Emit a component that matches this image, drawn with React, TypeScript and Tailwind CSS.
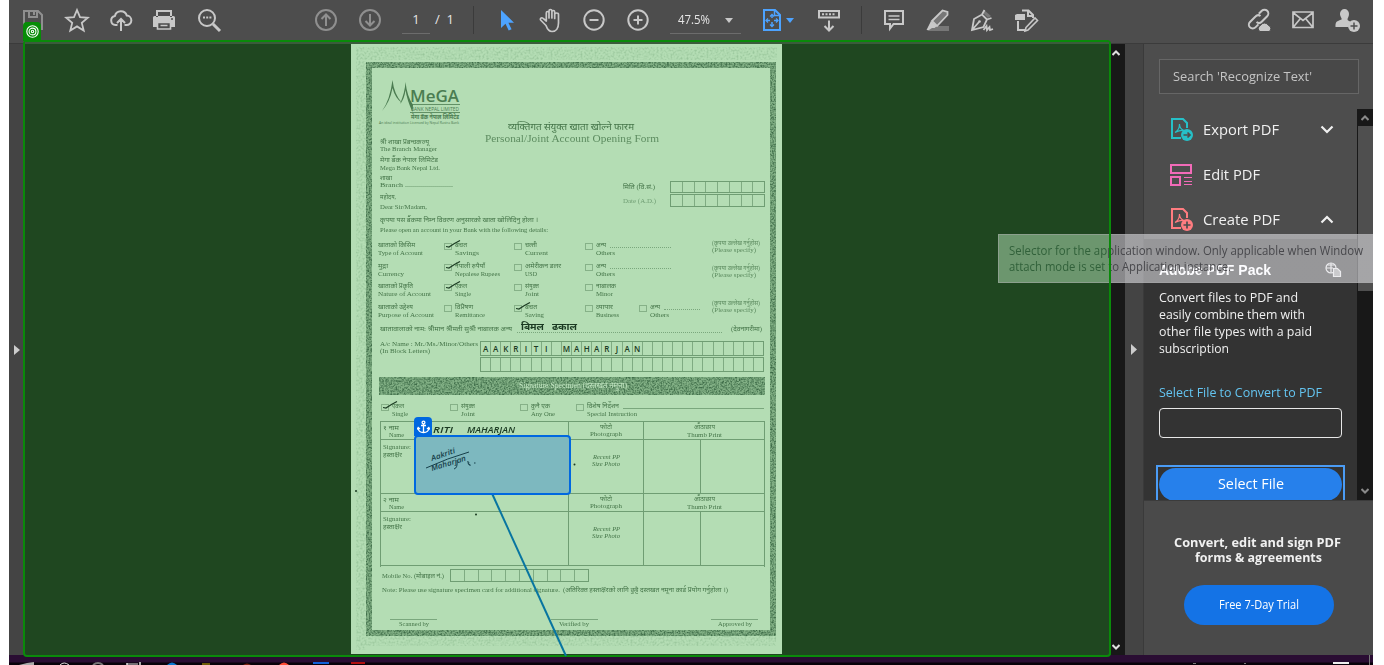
import React, { useLayoutEffect, useRef, useState } from "react";

type FitProps = { className?: string; children: React.ReactNode };

/** Single line of text stretched to the exact width of its box. */
function Fit({ className = "", children }: FitProps) {
  const box = useRef<HTMLSpanElement>(null);
  const ink = useRef<HTMLSpanElement>(null);
  const [scale, setScale] = useState(1);
  useLayoutEffect(() => {
    if (box.current && ink.current && ink.current.offsetWidth > 0) {
      setScale(box.current.clientWidth / ink.current.getBoundingClientRect().width);
    }
  }, []);
  return (
    <span ref={box} className={`block shrink-0 whitespace-nowrap ${className}`}>
      <span ref={ink} className="inline-block origin-left" style={{ transform: `scaleX(${scale})` }}>
        {children}
      </span>
    </span>
  );
}

function Slot({ children, className = "w-11" }: { children: React.ReactNode; className?: string }) {
  return <div className={`flex h-full shrink-0 items-center justify-center ${className}`}>{children}</div>;
}

function Icon({ children, className = "" }: { children: React.ReactNode; className?: string }) {
  return (
    <svg width="26" height="26" viewBox="0 0 26 26" fill="none" stroke="#c8c8c8" strokeWidth="2" className={`shrink-0 ${className}`}>
      {children}
    </svg>
  );
}

function Toolbar() {
  return (
    <header className="flex h-11 shrink-0 items-start border-b border-[#3b3b3b] bg-[#4d4d4d] pl-0.5 font-['Open_Sans',sans-serif] text-[13px] text-[#e6e6e6]">
      <div className="flex h-10 w-full items-center">
        <Slot>
          <Icon>
            <g stroke="#8f8f8f">
              <path d="M4 4h14l4 4v14H4z" />
              <path d="M9 4v6h8V4M14 5v3" />
            </g>
          </Icon>
        </Slot>
        <Slot>
          <Icon><path strokeWidth="1.800" d="M13 3l3 7.200 7.800.6-6 5.100 1.900 7.600L13 19.400l-6.700 4.100 1.900-7.600-6-5.100 7.800-.6z" /></Icon>
        </Slot>
        <Slot>
          <Icon><path d="M9.500 18H7.500a4.600 4.600 0 0 1-.6-9.100A6.200 6.200 0 0 1 18.800 8.600 4.700 4.700 0 0 1 18.500 18h-2M13 24V12.500M9 16l4-4 4 4" /></Icon>
        </Slot>
        <Slot>
          <Icon className="-translate-x-px">
            <g fill="#c8c8c8" stroke="none">
              <path fillRule="evenodd" d="M5 3h16v7H5zM7 5v5h12V5zM3.500 9h19a1.500 1.500 0 0 1 1.500 1.500V20h-4v-4H6v4H2v-9.500A1.500 1.500 0 0 1 3.500 9z" />
            </g>
            <path d="M6.500 15.500h13V22h-13zM9.500 18.500h7" strokeWidth="1.600" />
            <path d="M20 12h2" stroke="#4d4d4d" strokeWidth="1.500" />
          </Icon>
        </Slot>
        <Slot>
          <Icon>
            <circle cx="11" cy="11" r="8" />
            <path d="M17 17l7 7" strokeWidth="3" />
            <path d="M7 10.500h2M10.200 10.500h2M13.400 10.500h2" />
          </Icon>
        </Slot>
        <Slot className="ml-[73px] w-11">
          <Icon><g stroke="#8f8f8f"><circle cx="13" cy="13" r="10" /><path d="M13 19V8M8.500 12L13 7.500l4.500 4.500" /></g></Icon>
        </Slot>
        <Slot>
          <Icon><g stroke="#8f8f8f"><circle cx="13" cy="13" r="10" /><path d="M13 7v11M8.500 14l4.500 4.500 4.500-4.500" /></g></Icon>
        </Slot>
        <div className="mb-1.5 ml-2.5 flex h-[27px] w-7 items-center justify-center self-end border-b border-[#6c6c6c]">1</div>
        <div className="ml-[5px] w-[43px] whitespace-nowrap">/&nbsp; 1</div>
        <div className="-ml-[5px] h-7 w-px bg-[#3b3b3b]" />
        <Slot className="ml-2.5 w-11">
          <Icon className="translate-x-px"><path fill="#4da3ff" stroke="none" d="M7 3v18l4.500-4.300 3.200 6.800 2.900-1.300-3.200-6.500H20z" /></Icon>
        </Slot>
        <Slot>
          <Icon className="translate-x-px"><path strokeWidth="1.700" strokeLinecap="round" strokeLinejoin="round" d="M8 18.500L2.600 13c-1-1.500.9-2.900 2.200-1.800L8.300 14V6c0-2 2.700-2 2.700 0v5-7c0-2 2.900-2 2.900 0v7-6c0-2 2.800-2 2.800 0v6.500-4c0-2 3.800-2 3.800 0V16c0 5-2.500 8.500-6.500 8.500-3 0-4.600-2-6-6z" /></Icon>
        </Slot>
        <Slot><Icon><circle cx="13" cy="13" r="9.700" /><path d="M8.500 13h9" /></Icon></Slot>
        <Slot><Icon><circle cx="13" cy="13" r="9.700" /><path d="M8.500 13h9M13 8.500v9" /></Icon></Slot>
        <div className="mb-1.5 ml-2.5 flex h-[27px] w-[71px] items-center self-end border-b border-[#6c6c6c] pl-2">
          <Fit className="w-8">47.5%</Fit>
          <svg width="8" height="5" className="ml-[15px]"><path d="M0 0h8L4 5z" fill="#c8c8c8" /></svg>
        </div>
        <Slot className="ml-[9px] w-11">
          <Icon className="translate-x-px">
            <g stroke="#4da3ff">
              <path d="M4 3h11l5 5v15H4z" /><path d="M14.500 3v5.500H20" strokeWidth="1.500" />
              <path d="M12 8v3M12 15v4M7 13.500h3M14 13.500h4" strokeWidth="1.500" />
              <path d="M10 9.500l2-2 2 2M10 17.500l2 2 2-2M8 11.500l-2 2 2 2M16 11.500l2 2-2 2" strokeWidth="1.300" />
            </g>
          </Icon>
        </Slot>
        <svg width="8" height="5" className="-ml-[8px] shrink-0"><path d="M0 0h8L4 5z" fill="#4da3ff" /></svg>
        <Slot className="ml-[13px] w-11">
          <Icon><path d="M3 4h20v6.500H3zM13 13.500V23M8.500 19l4.500 4.500 4.500-4.500" /><path d="M6 7.200h14" strokeDasharray="2 1.500" /></Icon>
        </Slot>
        <div className="ml-2.5 h-7 w-px bg-[#3b3b3b]" />
        <Slot className="ml-2.5 w-11">
          <Icon><path d="M4 4h18v13H12.500L9 21.500V17H4z" /><path d="M7.500 9h11M7.500 12.500h11" strokeWidth="1.500" /></Icon>
        </Slot>
        <Slot className="w-[43px]">
          <Icon>
            <path fill="#777" stroke="none" d="M8 19h16v5H2z" />
            <path strokeWidth="1.800" fill="#777" d="M7 14L17.500 3.500 22.500 5v3L12 19z" />
            <path fill="#c8c8c8" stroke="none" d="M6 14l6 5-2.500 2H7l-3 2H1.500z" />
          </Icon>
        </Slot>
        <Slot>
          <Icon className="translate-x-px">
            <path fill="#777" stroke="none" d="M15 3l7 6-3 2-5-5z" />
            <path strokeWidth="1.800" d="M3 23l2-11 8-4.500 5 5-3.500 7.500zM3 23l7-8M13 7.500L15.500 3M18 12.500l4.500-1.500" />
            <circle cx="10.500" cy="14.500" r="1.300" fill="#c8c8c8" stroke="none" />
            <path strokeWidth="1.800" d="M14.500 23l3-4 .5 4 2.500-3 .5 3 3-1" />
          </Icon>
        </Slot>
        <Slot className="w-[45px]">
          <Icon>
            <path d="M9 3.500h6.500L20 8v3M15 4v5h5M5 14v9h7" />
            <path fill="#c8c8c8" stroke="none" d="M4 7h8v6H2V8z" />
            <path d="M13 20.500L22 11l2.500 2.500-9.500 9.500-3 1z" strokeWidth="1.600" />
          </Icon>
        </Slot>
        <Slot className="ml-[189px] w-11">
          <Icon>
            <path d="M14.500 9a3.800 3.800 0 0 0-5 .5l-5.500 5.500a3.800 3.800 0 0 0 5.400 5.400l3-3" />
            <path d="M10.500 15a3.800 3.800 0 0 0 5.200-.3l5.500-5.500a3.800 3.800 0 0 0-5.400-5.400l-3 3" />
            <path fill="#c8c8c8" stroke="#4d4d4d" strokeWidth="1" d="M14 24.500a3.300 3.300 0 0 1 .5-6 4.500 4.500 0 0 1 8 0A3.200 3.200 0 0 1 23 24.500z" />
          </Icon>
        </Slot>
        <Slot><Icon><path strokeWidth="1.700" d="M3 5h20v15.500H3zM3 5.500l10 8 10-8M3 20.500l7-8.500M23 20.500l-7-8.500" /></Icon></Slot>
        <Slot>
          <Icon className="translate-x-px">
            <path fill="#c8c8c8" stroke="none" d="M9.500 2a4.500 5 0 0 1 4.500 5c0 2.500-1.500 4-1.500 5.500 0 1 2 1.500 3 2.500a7 7 0 0 0-2 5H.5c0-4.500 0-5.500 6-7.500 1-.5-1.500-3-1.500-5.500a4.500 5 0 0 1 4.500-5z" />
            <circle cx="19" cy="19" r="6" fill="#c8c8c8" stroke="none" />
            <path d="M19 15.500v7M15.500 19h7" stroke="#4d4d4d" strokeWidth="1.500" />
          </Icon>
        </Slot>
      </div>
    </header>
  );
}

function Tick() {
  return (
    <svg width="18" height="11" className="absolute -top-[5px] left-px" fill="none" stroke="#1b3a22" strokeWidth="1.200">
      <path d="M0 7.500l3 .5Q7 5 14 1.500" />
    </svg>
  );
}

type OptionProps = { ne: string; en: string; neW: string; enW: string; checked?: boolean; dots?: string; className: string };

function Option({ ne, en, neW, enW, checked, dots, className }: OptionProps) {
  return (
    <div className={`flex shrink-0 ${className}`}>
      <div className="relative mt-[2px] mr-[3px] h-[7px] w-2 shrink-0 border border-[#86b188]">{checked && <Tick />}</div>
      <div>
        <div className="flex h-2 items-center">
          <Fit className={neW}>{ne}</Fit>
          {dots && <span className={`mt-1 ml-1 border-b ${dots}`} />}
        </div>
        <Fit className={enW}>{en}</Fit>
      </div>
    </div>
  );
}

function Label({ ne, en, neW, enW }: { ne: string; en: string; neW: string; enW: string }) {
  return (
    <div className="w-[66px] shrink-0">
      <Fit className={neW}>{ne}</Fit>
      <Fit className={enW}>{en}</Fit>
    </div>
  );
}

function Specify({ className = "" }: { className?: string }) {
  return (
    <div className={`leading-[7px] opacity-80 ${className}`}>
      <Fit className="w-12">(कृपया उल्लेख गर्नुहोस)</Fit>
      <Fit className="w-11">(Please specify)</Fit>
    </div>
  );
}

function Cells({ n, text = "", className }: { n: number; text?: string; className: string }) {
  return (
    <div className={`flex border border-[#6f9d73] ${className}`}>
      {Array.from({ length: n }, (_, i) => (
        <div key={i} className="flex flex-1 items-center justify-center border-r border-[#7fab82] pt-px font-['Open_Sans',sans-serif] text-[8px] font-semibold text-[#1b3a22] last:border-r-0">
          {text[i] ?? ""}
        </div>
      ))}
    </div>
  );
}

function ApplicantTable({ num }: { num: string }) {
  return (
    <>
      <div className="flex h-[18px] border-b border-[#6f9d73]">
        <div className="w-[188px] border-r border-[#6f9d73] pt-0.5 pl-0.5">
          <Fit className="w-4">{num} नाम</Fit>
          <Fit className="-mt-px ml-1.5 w-[15px]">Name</Fit>
        </div>
        <div className="flex w-[75px] flex-col items-center border-r border-[#6f9d73] pt-px">
          <Fit className="w-3">फोटो</Fit>
          <Fit className="-mt-px w-8">Photograph</Fit>
        </div>
        <div className="flex flex-1 flex-col items-center pt-px">
          <Fit className="w-[21px]">औंठाछाप</Fit>
          <Fit className="w-[35px]">Thumb Print</Fit>
        </div>
      </div>
      <div className="flex h-[54px] border-b border-[#6f9d73]">
        <div className="w-[188px] border-r border-[#6f9d73] pt-[3px] pl-0.5">
          <Fit className="w-7">Signature:</Fit>
          <Fit className="w-[19px]">हस्ताक्षर</Fit>
        </div>
        <div className="flex w-[75px] flex-col items-center border-r border-[#6f9d73] pt-3.5 leading-[7px] italic">
          <Fit className="w-[27px]">Recent PP</Fit>
          <Fit className="w-[28px]">Size Photo</Fit>
        </div>
        <div className="w-[57px] border-r border-[#6f9d73]" />
      </div>
    </>
  );
}

function Grain() {
  return (
    <svg width="431" height="610" className="absolute top-0 left-0">
      <defs>
        <filter id="coarse" x="0" y="0" width="100%" height="100%" colorInterpolationFilters="sRGB">
          <feTurbulence type="fractalNoise" baseFrequency="0.6" numOctaves="2" seed="4" />
          <feColorMatrix values="0 0 0 0 .24  0 0 0 0 .42  0 0 0 0 .28  2.400 0 0 0 -.9" result="n" />
          <feComposite in="n" in2="SourceGraphic" operator="in" />
        </filter>
        <filter id="fine" x="0" y="0" width="100%" height="100%" colorInterpolationFilters="sRGB">
          <feTurbulence type="fractalNoise" baseFrequency="0.5" numOctaves="2" seed="9" />
          <feColorMatrix values="0 0 0 0 .45  0 0 0 0 .65  0 0 0 0 .47  1 0 0 0 -.42" result="n" />
          <feComposite in="n" in2="SourceGraphic" operator="in" />
        </filter>
      </defs>
      <path d="M5 3h421v13H15v590H5zM15 592h410v10H15z" filter="url(#fine)" />
      <path fillRule="evenodd" fill="#82b085" d="M15 18h410v574H15zM21 24v562h398V24z" />
      <path fillRule="evenodd" d="M15 18h410v574H15zM21 24v562h398V24z" filter="url(#coarse)" />
      <path fill="#82b085" d="M28 333h386v18H28z" />
      <path d="M28 333h386v18H28z" filter="url(#coarse)" />
      <g fill="#1b3a22"><circle cx="223.500" cy="420.500" r="1" /><circle cx="125" cy="470.500" r="1" /><circle cx="5" cy="447" r="1" /></g>
    </svg>
  );
}

function Logo() {
  return (
    <svg width="96" height="48" className="ml-px block shrink-0" fill="#4b7c51">
      <path d="M4 31Q12 20 14.500 0 16 14 24 23q-7-5-9.500-15Q12 22 4 31zM22 24q5-12 5.500-22Q29 16 35 25l-.5 7Q29 20 27.500 10q-1 9-5.500 14z" />
      <text x="32" y="22" fontSize="16" fontFamily="Open Sans, sans-serif" fontWeight="600" textLength="49" lengthAdjust="spacingAndGlyphs">MeGA</text>
      <path d="M32 24.500h50M32 32.500h50" stroke="#4b7c51" strokeWidth=".8" />
      <text x="33" y="31" fontSize="6" fontFamily="Open Sans, sans-serif" textLength="48" lengthAdjust="spacingAndGlyphs">BANK NEPAL LIMITED</text>
      <text x="33" y="38.500" fontSize="5.500" fontFamily="Noto Sans, sans-serif" fontWeight="bold" textLength="48" lengthAdjust="spacingAndGlyphs">मेगा बैंक नेपाल लिमिटेड</text>
      <text x="1" y="44" fontSize="3.500" fontFamily="Open Sans, sans-serif" textLength="80" lengthAdjust="spacingAndGlyphs">An ideal institution Licensed by Nepal Rastra Bank</text>
    </svg>
  );
}

function Form() {
  return (
    <article className="relative h-[610px] w-[431px] shrink-0 bg-[#b4ddb4] font-['Liberation_Serif','Noto_Sans',serif] text-[7px] leading-[8px] text-[#457549]">
      <Grain />
      <div className="relative flex h-full flex-col pt-9 pr-[17px] pl-[29px]">
        <div className="-ml-[3px] flex h-[132px]">
          <div className="w-[108px] shrink-0">
            <Logo />
            <div className="pt-2.5 pl-[3px]">
              <Fit className="w-[49px]">श्री शाखा प्रबन्धकज्यू</Fit>
              <Fit className="-mt-px w-[57px]">The Branch Manager</Fit>
              <Fit className="mt-[3px] w-[58px]">मेगा बैंक नेपाल लिमिटेड</Fit>
              <Fit className="w-[60px]">Mega Bank Nepal Ltd.</Fit>
              <Fit className="mt-0.5 w-3">शाखा</Fit>
              <Fit className="-mt-px w-[73px]">Branch ........................</Fit>
              <Fit className="mt-1 w-4">महोदय,</Fit>
              <Fit className="mt-0.5 w-[47px]">Dear Sir/Madam,</Fit>
            </div>
          </div>
          <div className="pt-[41px]">
            <Fit className="ml-[23px] h-[11px] w-[126px] text-[10px] leading-[11px]">व्यक्तिगत संयुक्त खाता खोल्ने फारम</Fit>
            <Fit className="h-3 w-[174px] text-[11px] leading-3 text-[#5d8c60]">Personal/Joint Account Opening Form</Fit>
            <div className="mt-[37px] flex items-center">
              <Fit className="ml-[138px] w-8">मिति (वि.सं.)</Fit>
              <Cells n={8} className="ml-[15px] h-3 w-[95px]" />
            </div>
            <div className="mt-px flex items-center">
              <Fit className="ml-[138px] w-[33px] text-[#6f9d73]">Date (A.D.)</Fit>
              <Cells n={8} className="ml-[14px] h-[13px] w-[95px]" />
            </div>
          </div>
        </div>
        <Fit className="mt-1 w-[158px]">कृपया यस बैंकमा निम्न विवरण अनुसारको खाता खोलिदिनु होला ।</Fit>
        <Fit className="mt-0.5 w-[168px]">Please open an account in your Bank with the following details:</Fit>

        <div className="mt-[7px] -ml-0.5 flex h-[21px] shrink-0">
          <Label ne="खाताको किसिम" neW="w-[37px]" en="Type of Account" enW="w-[45px]" />
          <Option checked className="w-[70px]" ne="बचत" neW="w-3" en="Savings" enW="w-6" />
          <Option className="w-[71px]" ne="चल्ती" neW="w-3" en="Current" enW="w-[23px]" />
          <Option className="w-[127px]" ne="अन्य" neW="w-2.5" en="Others" enW="w-[19px]" dots="w-[61px] border-dotted border-[#7aa77d]" />
          <Specify className="-mt-px" />
        </div>
        <div className="-ml-0.5 flex h-5 shrink-0">
          <Label ne="मुद्रा" neW="w-2.5" en="Currency" enW="w-[26px]" />
          <Option checked className="w-[70px]" ne="नेपाली रुपैयाँ" neW="w-[30px]" en="Nepalese Rupees" enW="w-[45px]" />
          <Option className="w-[71px]" ne="अमेरीकन डलर" neW="w-9" en="USD" enW="w-3" />
          <Option className="w-[127px]" ne="अन्य" neW="w-2.5" en="Others" enW="w-[19px]" dots="w-[61px] border-dotted border-[#7aa77d]" />
          <Specify className="mt-[3px]" />
        </div>
        <div className="-ml-0.5 flex h-[21px] shrink-0">
          <Label ne="खाताको प्रकृति" neW="w-[35px]" en="Nature of Account" enW="w-[53px]" />
          <Option checked className="w-[70px]" ne="एकल" neW="w-3" en="Single" enW="w-4" />
          <Option className="w-[71px]" ne="संयुक्त" neW="w-3.5" en="Joint" enW="w-3.5" />
          <Option className="w-[127px]" ne="नाबालक" neW="w-5" en="Minor" enW="w-[17px]" />
        </div>
        <div className="-ml-0.5 flex h-5 shrink-0">
          <Label ne="खाताको उद्देश्य" neW="w-[35px]" en="Purpose of Account" enW="w-[56px]" />
          <Option className="w-[70px]" ne="विप्रेषण" neW="w-[18px]" en="Remittance" enW="w-[30px]" />
          <Option checked className="w-[71px]" ne="बचत" neW="w-3" en="Saving" enW="w-[19px]" />
          <Option className="w-[54px]" ne="व्यापार" neW="w-[17px]" en="Business" enW="w-[23px]" />
          <Option className="w-[73px]" ne="अन्य" neW="w-2.5" en="Others" enW="w-[19px]" dots="w-9 border-dotted border-[#7aa77d]" />
          <Specify className="-mt-[3px]" />
        </div>
        <div className="-mt-0.5 flex h-[15px] shrink-0 items-center">
          <Fit className="w-[132px]">खातावालाको नाम: श्रीमान श्रीमती सुश्री नाबालक अन्य</Fit>
          <div className="ml-[5px] flex h-2 w-[205px] items-start border-b border-dotted border-[#7aa77d] text-[9px] font-bold text-[#1b3a22] italic">
            <Fit className="-mt-[2px] ml-1 w-[23px]">बिमल</Fit>
            <Fit className="-mt-[2px] ml-2 w-[25px]">ढकाल</Fit>
          </div>
          <Fit className="ml-[9px] w-[31px]">(देवनागरीमा)</Fit>
        </div>
        <div className="mt-[5px] flex shrink-0">
          <div className="w-[100px] pt-px">
            <Fit className="-mt-0.5 w-[98px]">A/c Name : Mr./Ms./Minor/Others</Fit>
            <Fit className="-mt-px w-[50px]">(In Block Letters)</Fit>
          </div>
          <div>
            <Cells n={28} text="AAKRITI MAHARJAN" className="h-[15px] w-[284px]" />
            <Cells n={28} className="mt-px h-[15px] w-[284px]" />
          </div>
        </div>
        <div className="mt-[5px] flex h-[18px] shrink-0 items-center justify-center text-[8px] text-[#c3e6c3]">
          <Fit className="w-[108px]">Signature Specimen (दस्तखत नमूना)</Fit>
        </div>
        <div className="mt-[7px] ml-px flex h-[19px] shrink-0">
          <Option checked className="w-[69px]" ne="एकल" neW="w-3" en="Single" enW="w-4" />
          <Option className="w-[70px]" ne="संयुक्त" neW="w-3.5" en="Joint" enW="w-3.5" />
          <Option className="w-[56px]" ne="कुनै एक" neW="w-[19px]" en="Any One" enW="w-6" />
          <Option className="w-[188px]" ne="विशेष निर्देशन" neW="w-8" en="Special Instruction" enW="w-[50px]" dots="w-[141px] border-solid border-[#7aa77d]" />
        </div>
        <div className="h-[146px] w-[385px] shrink-0 border-t border-r border-l border-[#6f9d73]">
          <ApplicantTable num="१" />
          <ApplicantTable num="२" />
        </div>
        <div className="mt-0.5 ml-0.5 flex shrink-0 items-center">
          <Fit className="w-[62px]">Mobile No. (मोबाइल नं.)</Fit>
          <Cells n={10} className="ml-[6px] h-[13px] w-[139px]" />
        </div>
        <div className="mt-[4px] ml-0.5 flex shrink-0">
          <Fit className="w-[178px]">Note: Please use signature specimen card for additional signature.</Fit>
          <Fit className="ml-[3px] w-[165px]">(अतिरिक्त हस्ताक्षरको लागि छुट्टै दस्तखत नमूना कार्ड प्रयोग गर्नुहोला ।)</Fit>
        </div>
        <div className="mt-[25px] ml-2.5 flex w-[368px] shrink-0 justify-between">
          <div className="flex w-[47px] justify-center border-t border-[#7aa77d]"><Fit className="w-[30px]">Scanned by</Fit></div>
          <div className="flex w-[47px] justify-center border-t border-[#7aa77d]"><Fit className="w-[30px]">Verified by</Fit></div>
          <div className="flex w-[47px] justify-center border-t border-[#7aa77d]"><Fit className="w-[34px]">Approved by</Fit></div>
        </div>
      </div>
    </article>
  );
}

function PdfIcon({ color, plus }: { color: string; plus?: boolean }) {
  return (
    <svg width="24" height="24" viewBox="0 0 24 24" fill="none" stroke={color} strokeWidth="2" className="shrink-0">
      <path d="M11 20H2V1h11l4 4v5" />
      <path strokeWidth="1.200" d="M5 14.500c3.500-2 4.500-5 4.500-8.500 0 3.500 1.500 5.500 4.500 6.500-3.500-.5-6 .5-9 2z" />
      <circle cx="17" cy="17" r="6" fill={color} stroke="none" />
      <path stroke="#4d4d4d" strokeWidth="1.700" d={plus ? "M17 13.500v7M13.500 17h7" : "M13.500 17h6.500M17.500 14.500l2.500 2.500-2.500 2.500"} />
    </svg>
  );
}

function Chevron({ up }: { up?: boolean }) {
  return (
    <svg width="14" height="9" fill="none" stroke="#f0f0f0" strokeWidth="2.200" className="shrink-0">
      <path d={up ? "M1.500 7.500L7 2l5.500 5.500" : "M1.500 1.500L7 7l5.500-5.500"} />
    </svg>
  );
}

function SmallArrow({ up, dim }: { up?: boolean; dim?: boolean }) {
  return (
    <svg width="8" height="6" fill="none" stroke={dim ? "#8a8a8a" : "#e0e0e0"} strokeWidth="2" className="shrink-0">
      <path d={up ? "M.5 5L4 1.500 7.500 5" : "M.5 1L4 4.500 7.500 1"} />
    </svg>
  );
}

function SidePanel() {
  return (
    <aside className="flex w-[229px] shrink-0 flex-col bg-[#4d4d4d] font-['Open_Sans',sans-serif] text-[#f0f0f0]">
      <div className="mt-[15px] ml-[15px] flex h-[35px] w-[200px] shrink-0 items-center border border-[#666] bg-[#484848] pt-px pl-[13px] text-[13px] text-[#c4c4c4]">
        <Fit className="w-[139px]">Search 'Recognize Text'</Fit>
      </div>
      <div className="mt-[15px] flex h-[391px] shrink-0">
        <div className="flex w-[213px] flex-col overflow-hidden text-[15px]">
          <div className="flex h-[43px] shrink-0 items-center pb-0.5 pl-[26px]"><PdfIcon color="#26c0c7" /><Fit className="ml-[9px] w-[76px]">Export PDF</Fit><span className="ml-[41px]"><Chevron /></span></div>
          <div className="flex h-[45px] shrink-0 items-center pl-[26px]">
            <svg width="24" height="24" fill="none" stroke="#f26bb8" strokeWidth="2"><path d="M1 2h20v8H1zM1 14h9v8H1z" /><path strokeWidth="1" d="M14 14.500h8M14 18.500h8M14 21.500h8" /></svg>
            <Fit className="ml-[9px] w-[57px]">Edit PDF</Fit>
          </div>
          <div className="flex h-[42px] shrink-0 items-center pt-[3px] pl-[26px]"><PdfIcon color="#ff7c80" plus /><Fit className="ml-[9px] w-[77px]">Create PDF</Fit><span className="ml-10"><Chevron up /></span></div>
          <div className="flex flex-1 flex-col bg-[#333] pl-[15px] text-[13px]">
            <div className="mt-[22px] flex h-[18px] items-center font-['Liberation_Sans',sans-serif] text-[14px] font-bold text-white">
              <Fit className="w-[112px]">Adobe PDF Pack</Fit>
              <svg width="17" height="16" className="ml-[54px]" fill="none" stroke="#ddd" strokeWidth="1.200"><circle cx="6" cy="6" r="5" /><path d="M1 6h7M6 1v10M3 3h6" /><path fill="#999" d="M8.500 6.500h4l3 3v5h-7z" /></svg>
            </div>
            <div className="mt-[10px] leading-[17px]">
              <Fit className="w-[139px]">Convert files to PDF and</Fit>
              <Fit className="w-[146px]">easily combine them with</Fit>
              <Fit className="w-[153px]">other file types with a paid</Fit>
              <Fit className="w-[70px]">subscription</Fit>
            </div>
            <Fit className="mt-[26px] w-[163px] leading-[18px] text-[#64c4f0]">Select File to Convert to PDF</Fit>
            <div className="mt-[7px] h-[30px] w-[183px] shrink-0 rounded border border-[#e8e8e8]" />
            <div className="mt-[27px] -ml-[3px] h-[39px] w-[189px] shrink-0 border-2 border-[#4b9cf5] p-px">
              <div className="flex h-[33px] items-center justify-center rounded-full bg-[#2680eb] pb-0.5 text-[15px] text-white"><Fit className="w-[66px]">Select File</Fit></div>
            </div>
          </div>
        </div>
        <div className="flex w-4 flex-col items-center justify-between bg-[#181818]">
          <div className="flex h-[182px] w-full flex-col">
            <div className="flex h-[17px] items-center justify-center"><SmallArrow up dim /></div>
            <div className="ml-px flex-1 bg-[#4f4f4f]" />
          </div>
          <div className="pb-1.5"><SmallArrow dim /></div>
        </div>
      </div>
      <div className="flex flex-1 flex-col items-center border-t border-[#3b3b3b] bg-[#4a4a4a] font-bold">
        <Fit className="mt-[34px] mr-0.5 w-[167px] text-[12px] leading-[15px]">Convert, edit and sign PDF</Fit>
        <Fit className="w-[127px] text-[12px] leading-[15px]">forms &amp; agreements</Fit>
        <div className="mt-5 flex h-10 w-[150px] items-center justify-center rounded-full bg-[#1473e6] text-[12px] font-normal text-white"><Fit className="w-20">Free 7-Day Trial</Fit></div>
      </div>
    </aside>
  );
}

function Taskbar() {
  return (
    <footer className="h-2.5 shrink-0 bg-[#2a0d33]">
      <svg width="1364" height="10" className="block" fill="none">
        <path fill="#08020a" d="M0 7.500h1364v2.500H0z" />
        <path fill="#aaa" d="M18 8l7-1v3H10zM117 8h2v2h-2zM130 7h2v3h-2z" />
        <path stroke="#ddd" d="M51 10q4-4 9 0M118 9h11" />
        <path stroke="#777" strokeWidth="2" d="M84 10q5-4 10 0" />
        <path fill="#0878d0" d="M158 10q5-5 10 0z" /><path fill="#6c5b08" d="M193 8h8v2h-8z" />
        <path fill="#7a2414" d="M234 10q4-3 8 0z" /><path fill="#ff4b35" d="M270 10q5-5 10 0z" />
        <path fill="#1060d8" d="M304 7h16v2h-16z" /><path fill="#b01010" d="M342 7h14v2h-14z" />
        <path fill="#eee" d="M1324 7h16v2h-16z" /><path fill="#777" d="M1184 8h3v1h-3zM1235 8h2v1h-2zM1360 0h1v10h-1z" />
      </svg>
    </footer>
  );
}

function Signature() {
  return (
    <svg width="60" height="36" className="mt-1.5 ml-2" fill="none" stroke="#173f4a" strokeWidth="1">
      <path d="M2 25Q24 15 45 9" />
      <g fill="#173f4a" stroke="none" fontFamily="Open Sans, sans-serif" fontStyle="italic" fontWeight="600" fontSize="7.500">
        <text x="8" y="18" transform="rotate(-19 8 18)" textLength="25" lengthAdjust="spacingAndGlyphs">Aakriti</text>
        <text x="8" y="28" transform="rotate(-17 8 28)" textLength="36" lengthAdjust="spacingAndGlyphs">Maharjan</text>
      </g>
      <path d="M33 17q1 8-3 9M43 19q3-1 1 2 3 0 2 2M50 20h1.500" />
    </svg>
  );
}

function Selectors() {
  return (
    <>
      <div className="absolute top-[234px] left-[998px] h-[49px] w-[375px] border-y border-l border-[#aaaaac80] bg-[linear-gradient(90deg,#6c966e_113px,#fafaff80_113px)] bg-origin-border pt-2 pl-2.5 font-['Open_Sans',sans-serif] text-[12.5px] leading-4 text-[#48484c]">
        <Fit className="w-[354px]"><span className="text-[#31613a]">Selector for the ap</span>plication window. Only applicable when Window</Fit>
        <Fit className="w-[222px]"><span className="text-[#31613a]">attach mode is set </span>to Application instance.</Fit>
      </div>
      <div className="absolute top-10 left-[23px] h-[617px] w-[1088px] rounded border-2 border-[#0a8a0a]">
        <div className="h-0.5 bg-[#3a5c3b]" />
      </div>
      <div className="absolute top-[22px] left-[23px] flex h-[19px] w-[18px] items-center justify-center rounded-t bg-[#078c07]">
        <svg width="13" height="13" fill="none" stroke="#fff" strokeWidth="1.100"><circle cx="6.500" cy="6.500" r="5.700" /><circle cx="6.500" cy="6.500" r="3.400" /><circle cx="6.500" cy="6.500" r="1.200" /></svg>
      </div>
      <svg width="80" height="165" className="absolute top-[493px] left-[490px]"><path d="M2.500 1.500L76 163" stroke="#0875a0" strokeWidth="2" /></svg>
      <div className="absolute top-[435px] left-[414px] h-[60px] w-[157px] rounded-[4px] border-2 border-[#0068e0] bg-[#7db8bf]"><Signature /></div>
      <div className="absolute top-[417px] left-[414px] flex h-[19px] w-[156px]">
        <div className="flex w-[18px] items-center justify-center rounded-t bg-[#0068e0]">
          <svg width="13" height="14" fill="none" stroke="#fff" strokeWidth="1.300"><circle cx="6.500" cy="2.500" r="1.400" /><path d="M6.500 4v8.500M4 5.500h5M1 8q.5 4.500 5.500 4.500T12 8M0 9.500L1.200 7.500 3 9M13 9.500l-1.200-2L10 9" /></svg>
        </div>
        <div className="flex pt-[6px] pl-px font-['Open_Sans',sans-serif] text-[8px] leading-[14px] font-semibold text-[#1b3a22] italic">
          <Fit className="w-5">RITI</Fit>
          <Fit className="ml-3.5 w-[48px]">MAHARJAN</Fit>
        </div>
      </div>
    </>
  );
}

export default function App() {
  return (
    <div className="relative h-[665px] w-[1384px] overflow-hidden bg-white pr-[11px] pl-[9px]">
      <div className="flex h-full flex-col">
        <Toolbar />
        <main className="flex h-[611px] shrink-0">
          <div className="flex w-[15px] shrink-0 items-center justify-end bg-[#444] pr-1"><svg width="6" height="10"><path d="M0 0l6 5-6 5z" fill="#ccc" /></svg></div>
          <div className="flex w-[1087px] shrink-0 items-start bg-[#1f4720] pl-[327px]"><Form /></div>
          <div className="flex w-3.5 shrink-0 flex-col items-center justify-between bg-[#181818] pt-1.5 pr-1 pb-[5px]"><SmallArrow up /><SmallArrow /></div>
          <div className="flex w-[19px] shrink-0 items-center border-r border-[#3a3a3a] bg-[#444] pl-1.5"><svg width="6" height="11"><path d="M0 0l6 5.500L0 11z" fill="#ccc" /></svg></div>
          <SidePanel />
        </main>
        <Taskbar />
      </div>
      <Selectors />
    </div>
  );
}
